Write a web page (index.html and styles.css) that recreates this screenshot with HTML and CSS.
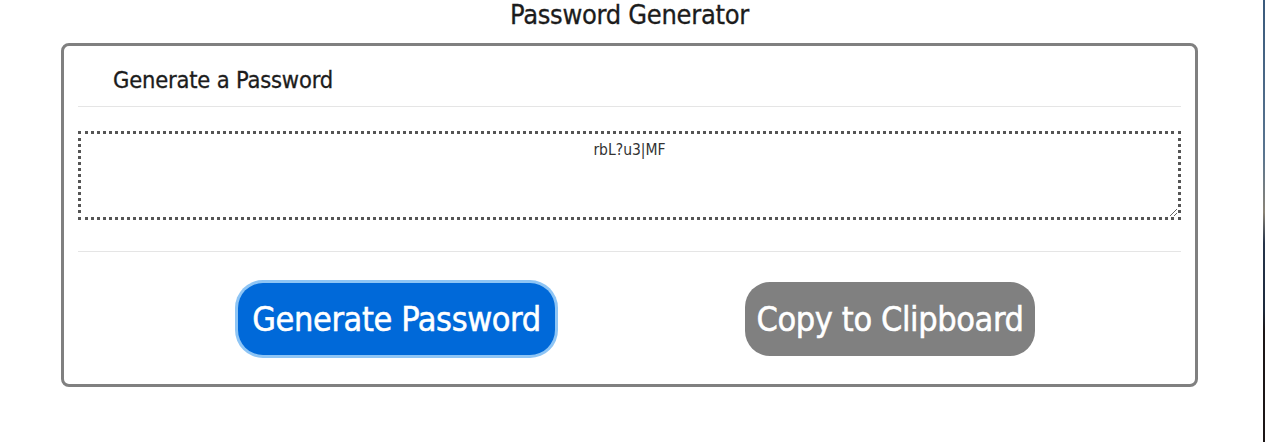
FILE: index.html
```html
<!DOCTYPE html>
<html>
<head>
<meta charset="utf-8">
<link rel="stylesheet" href="styles.css">
</head>
<body>
<div class="page">
  <h1 class="title">Password Generator</h1>
  <div class="card">
    <div class="card-header"><h2>Generate a Password</h2></div>
    <div class="card-body">
      <textarea class="output" readonly>rbL?u3|MF</textarea>
    </div>
    <div class="card-footer">
      <button class="btn btn-generate">Generate Password</button>
      <button class="btn btn-copy">Copy to Clipboard</button>
    </div>
  </div>
</div>
<div class="edge"></div>
</body>
</html>
```
FILE: styles.css
```css
html, body {
  margin: 0;
  padding: 0;
  background: #fff;
  height: 100%;
  overflow: hidden;
}
body {
  font-family: "DejaVu Sans Condensed", "DejaVu Sans", sans-serif;
  color: #1c1c1c;
  display: flex;
}
.page {
  width: 1259px;
  flex: none;
}
.edge {
  width: 2px;
  margin-left: 4px;
  height: 442px;
  background: linear-gradient(to bottom, #3a5a7c 0%, #5a7590 35%, #8a8478 48%, #26344a 55%, #1d2a3d 70%, #1b1516 75%, #1b1516 100%);
}
.title {
  margin: 0;
  height: 35px;
  text-align: center;
  font-size: 27px;
  font-weight: normal;
  line-height: 30px;
  letter-spacing: -0.3px;
  -webkit-text-stroke: 0.3px #1c1c1c;
}
.card {
  width: 1137px;
  box-sizing: border-box;
  margin: 8px auto 0;
  border: 3px solid #808080;
  border-radius: 8px;
  padding: 0 14px;
  height: 344px;
}
.card-header {
  border-bottom: 1px solid #e5e5e5;
  height: 61px;
  box-sizing: border-box;
  padding: 20px 0 0 35px;
}
.card-header h2 {
  margin: 0;
  font-size: 23.5px;
  font-weight: normal;
  line-height: 28px;
  letter-spacing: -0.2px;
  -webkit-text-stroke: 0.3px #1c1c1c;
}
.card-body {
  padding: 24px 0 0;
  height: 145px;
  border-bottom: 1px solid #e5e5e5;
  box-sizing: border-box;
}
.output {
  display: block;
  width: 100%;
  height: 89px;
  box-sizing: border-box;
  border: 3px dotted #555;
  resize: vertical;
  text-align: center;
  font-family: "DejaVu Sans Condensed", "DejaVu Sans", sans-serif;
  font-size: 15.5px;
  color: #333;
  padding: 7px 4px;
  margin: 0;
  outline: none;
}
.card-footer {
  display: flex;
  justify-content: center;
  align-items: flex-start;
  gap: 190px;
  padding: 30px 0 0 14px;
}
.btn {
  font-family: "DejaVu Sans Condensed", "DejaVu Sans", sans-serif;
  color: #fff;
  border: none;
  font-size: 34px;
  letter-spacing: -0.4px;
  -webkit-text-stroke: 0.5px #fff;
  border-radius: 25px;
  cursor: pointer;
  white-space: nowrap;
  padding: 0;
}
.btn-generate {
  background: #0069d9;
  box-shadow: 0 0 0 3px #8ec5f5;
  width: 317px;
  height: 72px;
  margin-top: 1px;
}
.btn-copy {
  background: #808080;
  width: 290px;
  height: 74px;
}
```
